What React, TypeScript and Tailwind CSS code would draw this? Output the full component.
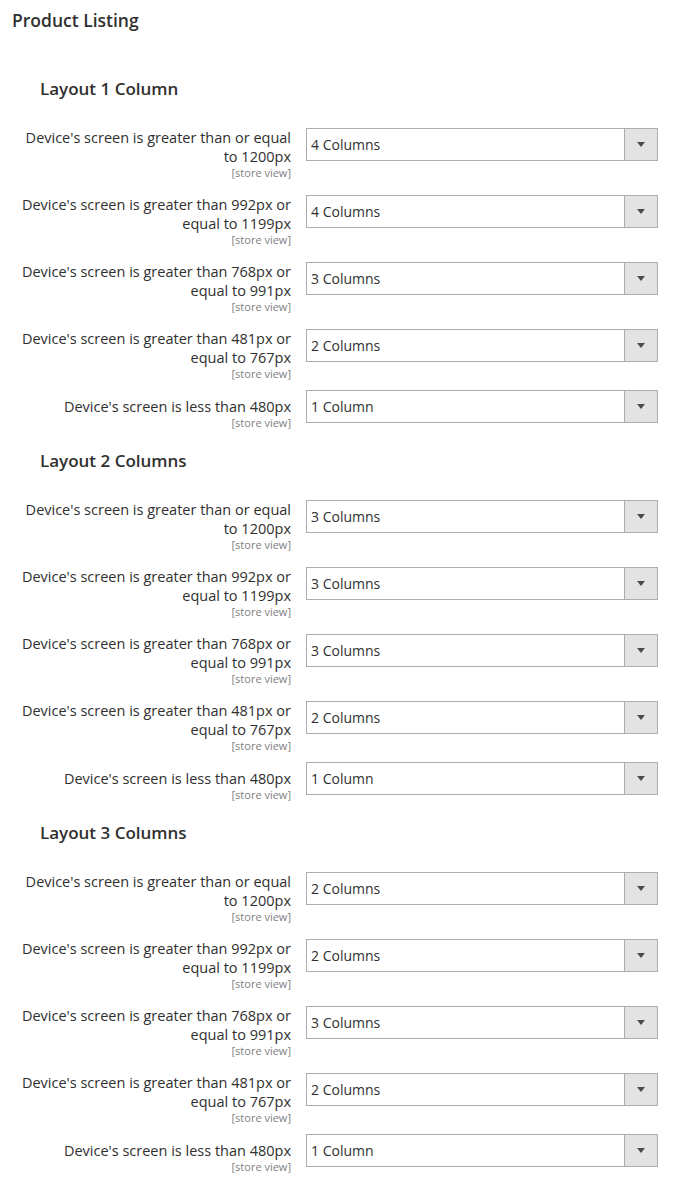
import React from 'react';

type Row = { label: string[]; value: string };

const sections: { title: string; rows: Row[] }[] = [
  {
    title: 'Layout 1 Column',
    rows: [
      { label: ["Device's screen is greater than or equal", 'to 1200px'], value: '4 Columns' },
      { label: ["Device's screen is greater than 992px or", 'equal to 1199px'], value: '4 Columns' },
      { label: ["Device's screen is greater than 768px or", 'equal to 991px'], value: '3 Columns' },
      { label: ["Device's screen is greater than 481px or", 'equal to 767px'], value: '2 Columns' },
      { label: ["Device's screen is less than 480px"], value: '1 Column' },
    ],
  },
  {
    title: 'Layout 2 Columns',
    rows: [
      { label: ["Device's screen is greater than or equal", 'to 1200px'], value: '3 Columns' },
      { label: ["Device's screen is greater than 992px or", 'equal to 1199px'], value: '3 Columns' },
      { label: ["Device's screen is greater than 768px or", 'equal to 991px'], value: '3 Columns' },
      { label: ["Device's screen is greater than 481px or", 'equal to 767px'], value: '2 Columns' },
      { label: ["Device's screen is less than 480px"], value: '1 Column' },
    ],
  },
  {
    title: 'Layout 3 Columns',
    rows: [
      { label: ["Device's screen is greater than or equal", 'to 1200px'], value: '2 Columns' },
      { label: ["Device's screen is greater than 992px or", 'equal to 1199px'], value: '2 Columns' },
      { label: ["Device's screen is greater than 768px or", 'equal to 991px'], value: '3 Columns' },
      { label: ["Device's screen is greater than 481px or", 'equal to 767px'], value: '2 Columns' },
      { label: ["Device's screen is less than 480px"], value: '1 Column' },
    ],
  },
];

function Select({ value }: { value: string }) {
  return (
    <div className="flex h-[33px] w-[352px] shrink-0 border border-[#adadad] bg-white">
      <div className="flex flex-1 items-center pl-[4px] text-[14px] text-[#303030]">{value}</div>
      <div className="flex w-[33px] items-center justify-center border-l border-[#adadad] bg-[#e3e3e3]">
        <svg width="8" height="5" viewBox="0 0 8 5">
          <path d="M0 0h8L4 5z" fill="#514943" />
        </svg>
      </div>
    </div>
  );
}

function FieldRow({ row }: { row: Row }) {
  const single = row.label.length === 1;
  return (
    <div className="flex items-start gap-[15px]">
      <div className={`w-[291px] shrink-0 text-right ${single ? 'pt-[7px]' : ''}`}>
        <div className="whitespace-nowrap text-[14.5px] font-medium leading-[19px] text-[#303030]">
          {row.label.map((l, i) => (
            <div key={i}>{l}</div>
          ))}
        </div>
        <div className="text-[11px] leading-[13px] text-[#808080]">[store view]</div>
      </div>
      <Select value={row.value} />
    </div>
  );
}

export default function App() {
  return (
    <div className="w-[693px] bg-white pt-[8px]" style={{ fontFamily: '"Open Sans", sans-serif' }}>
      <h1 className="pl-[12px] text-[17.5px] font-semibold leading-[24px] text-[#303030]">Product Listing</h1>
      <div className="mt-[46px]">
        {sections.map((s, si) => (
          <div key={s.title} className={si > 0 ? 'mt-[21px]' : ''}>
            <h2 className="pl-[40px] text-[17px] font-semibold leading-[22px] text-[#303030]">{s.title}</h2>
            <div className="mt-[28px] flex flex-col gap-[16px]">
              {s.rows.map((r, ri) => (
                <div key={ri} className={ri === 4 ? '-mt-[6px]' : ''}>
                  <FieldRow row={r} />
                </div>
              ))}
            </div>
          </div>
        ))}
      </div>
    </div>
  );
}
